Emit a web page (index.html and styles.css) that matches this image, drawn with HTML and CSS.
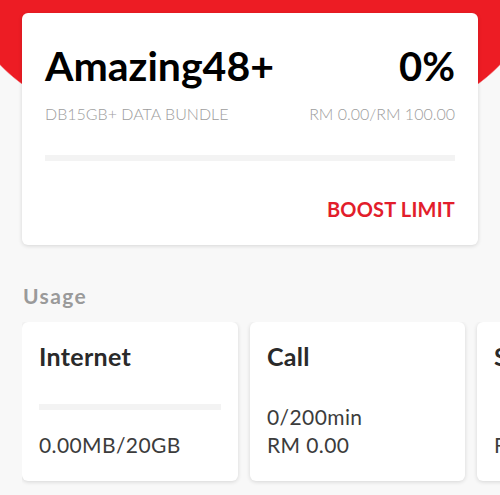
FILE: index.html
```html
<!DOCTYPE html>
<html>
<head>
<meta charset="utf-8">
<link rel="stylesheet" href="styles.css">
</head>
<body>
<div class="page">
  <section class="plan-card">
    <div class="plan-head">
      <h1 class="plan-name">Amazing48+</h1>
      <div class="plan-pct">0%</div>
    </div>
    <div class="plan-sub">
      <span>DB15GB+ DATA BUNDLE</span>
      <span>RM 0.00/RM 100.00</span>
    </div>
    <div class="plan-bar"></div>
    <div class="plan-actions">
      <a class="boost">BOOST LIMIT</a>
    </div>
  </section>

  <h2 class="section-title">Usage</h2>
  <div class="usage-row">
    <div class="usage-card">
      <div class="usage-title">Internet</div>
      <div class="usage-body">
        <div class="usage-bar"></div>
        <div class="usage-line">0.00MB/20GB</div>
      </div>
    </div>
    <div class="usage-card">
      <div class="usage-title">Call</div>
      <div class="usage-body">
        <div class="usage-line">0/200min</div>
        <div class="usage-line">RM 0.00</div>
      </div>
    </div>
    <div class="usage-card">
      <div class="usage-title">SMS</div>
      <div class="usage-body">
        <div class="usage-line">RM 0.00</div>
      </div>
    </div>
  </div>
</div>
</body>
</html>
```

FILE: styles.css
```css
html, body {
  margin: 0;
  padding: 0;
}
body {
  width: 500px;
  height: 495px;
  overflow: hidden;
  background-color: #f8f8f8;
  background-image: radial-gradient(ellipse 280px 146px at 250px 0, #ed1c24 99.4%, rgba(237,28,36,0) 100%);
  background-repeat: no-repeat;
  font-family: "Lato", "Liberation Sans", sans-serif;
}
.page {
  padding-top: 13px;
}
.plan-card {
  margin: 0 22px;
  height: 232px;
  box-sizing: border-box;
  padding: 31px 23px 0;
  background: #fff;
  border-radius: 6px;
  box-shadow: 0 1px 4px rgba(0,0,0,0.14);
  display: flex;
  flex-direction: column;
}
.plan-head {
  display: flex;
  justify-content: space-between;
  align-items: baseline;
}
.plan-name {
  margin: 0;
  font-size: 41px;
  font-weight: 700;
  line-height: 44px;
  color: #000;
}
.plan-pct {
  font-size: 40px;
  font-weight: 700;
  line-height: 44px;
  color: #000;
}
.plan-sub {
  margin-top: 16px;
  display: flex;
  justify-content: space-between;
  font-size: 16px;
  font-weight: 300;
  line-height: 20px;
  color: #9d9d9d;
}
.plan-bar {
  margin-top: 31px;
  height: 6px;
  background: #f3f3f3;
}
.plan-actions {
  margin-top: 36px;
  display: flex;
  justify-content: flex-end;
}
.boost {
  font-size: 20px;
  font-weight: 700;
  line-height: 24px;
  letter-spacing: 0.2px;
  color: #e21d2b;
}
.section-title {
  margin: 39px 0 0 23px;
  font-size: 21px;
  font-weight: 700;
  line-height: 24px;
  letter-spacing: 1.4px;
  color: #9a9a9a;
}
.usage-row {
  margin: 14px 0 0 22px;
  display: flex;
  gap: 12px;
  overflow: hidden;
  padding-bottom: 10px;
}
.usage-card {
  flex: 0 0 215px;
  height: 159px;
  box-sizing: border-box;
  padding: 19px 17px 22px;
  background: #fff;
  border-radius: 6px;
  box-shadow: 0 1px 4px rgba(0,0,0,0.14);
  display: flex;
  flex-direction: column;
  justify-content: space-between;
}
.usage-title {
  font-size: 25px;
  font-weight: 700;
  line-height: 30px;
  letter-spacing: 0.3px;
  color: #2a2a2a;
}
.usage-bar {
  width: 182px;
  height: 6px;
  margin-bottom: 21px;
  background: #f3f3f3;
}
.usage-line {
  font-size: 21px;
  font-weight: 400;
  line-height: 28px;
  letter-spacing: 0.4px;
  color: #3c3c3c;
}
```
